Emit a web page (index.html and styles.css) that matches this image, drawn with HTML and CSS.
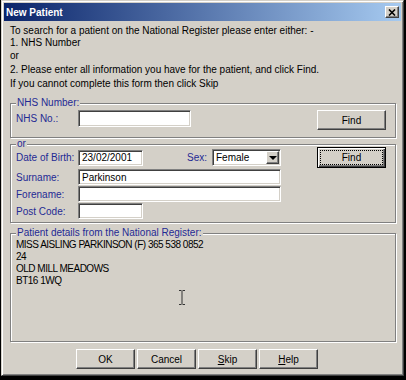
FILE: index.html
```html
<!DOCTYPE html>
<html lang="en">
<head>
    <meta charset="UTF-8">
    <meta name="viewport" content="width=device-width, initial-scale=1.0">
    <title>New Patient</title>
    <link rel="stylesheet" href="styles.css">
</head>
<body>
    <div class="window">
        <div class="titlebar">
            <span class="title">New Patient</span>
            <span class="close-btn">
                <svg width="8" height="7" viewBox="0 0 8 7"><path d="M1 0.5L7 6.5M7 0.5L1 6.5" stroke="#000" stroke-width="1.6" fill="none"/></svg>
            </span>
        </div>
        <div class="content">
            <p class="intro">To search for a patient on the National Register please enter either: -</p>
            <p class="intro">1. NHS Number</p>
            <p class="intro or-line">or</p>
            <p class="intro gap">2. Please enter all information you have for the patient, and click Find.</p>
            <p class="intro gap">If you cannot complete this form then click Skip</p>

            <!-- Search by NHS number -->
            <fieldset class="group nhs-group">
                <legend>NHS Number:</legend>
                <div class="nhs-row">
                    <label class="label">NHS No.:</label>
                    <input type="text" class="field nhs-field">
                    <button class="btn find">Find</button>
                </div>
            </fieldset>

            <!-- Search by details -->
            <fieldset class="group search-group">
                <legend>or</legend>
                <div class="search-body">
                    <div class="fields">
                        <div class="row">
                            <label class="label">Date of Birth:</label>
                            <input type="text" class="field short-field" value="23/02/2001">
                            <label class="label sex-label">Sex:</label>
                            <div class="combo">
                                <span class="combo-text">Female</span>
                                <span class="combo-arrow"><span class="triangle"></span></span>
                            </div>
                        </div>
                        <div class="row surname-row">
                            <label class="label">Surname:</label>
                            <input type="text" class="field long-field" value="Parkinson">
                        </div>
                        <div class="row tight">
                            <label class="label">Forename:</label>
                            <input type="text" class="field long-field">
                        </div>
                        <div class="row tight">
                            <label class="label">Post Code:</label>
                            <input type="text" class="field short-field">
                        </div>
                    </div>
                    <button class="btn find default">Find</button>
                </div>
            </fieldset>

            <!-- Result -->
            <fieldset class="group details">
                <legend>Patient details from the National Register:</legend>
                <div class="details-text">
                    MISS AISLING PARKINSON (F) 365 538 0852<br>
                    24<br>
                    OLD MILL MEADOWS<br>
                    BT16 1WQ
                </div>
            </fieldset>

            <div class="actions">
                <button class="btn action">OK</button>
                <button class="btn action">Cancel</button>
                <button class="btn action"><u>S</u>kip</button>
                <button class="btn action"><u>H</u>elp</button>
            </div>
        </div>
        <svg class="ibeam" width="6" height="15" viewBox="0 0 6 15"><path d="M0 0.5h2.5M3.5 0.5H6M3 1v13M0 14.5h2.5M3.5 14.5H6" stroke="#333" stroke-width="1" fill="none"/></svg>
    </div>
</body>
</html>
```

FILE: styles.css
```css
body {
    margin: 0;
    padding: 0;
    background-color: #000;
    font-family: "Liberation Sans", Arial, sans-serif;
    font-size: 10px;
    color: #000;
}
.window {
    position: relative;
    box-sizing: border-box;
    width: 403px;
    height: 376px;
    margin-left: 1px;
    padding: 1px;
    background-color: #d4d0c8;
    border: 1px solid;
    border-color: #d4d0c8 #404040 #404040 #d4d0c8;
    box-shadow: inset 1px 1px 0 #fff, inset -1px -1px 0 #808080;
}
.titlebar {
    display: flex;
    align-items: center;
    height: 18px;
    margin: 1px 1px 0 1px;
    background: linear-gradient(to right, #0a246a, #a6caf0);
}
.title {
    flex: 1;
    padding-left: 2px;
    color: #fff;
    font-weight: bold;
    font-size: 10px;
}
.close-btn {
    display: flex;
    align-items: center;
    justify-content: center;
    box-sizing: border-box;
    width: 14px;
    height: 12px;
    margin-right: 2px;
    background-color: #d4d0c8;
    border: 1px solid;
    border-color: #fff #404040 #404040 #fff;
    box-shadow: inset -1px -1px 0 #808080;
}
.content {
    padding: 4px 6px 0 7px;
}
.intro {
    margin: 0;
    line-height: 12px;
}
.intro.or-line {
    margin-top: 1px;
}
.intro.gap {
    margin-top: 2px;
}
.group {
    margin: 0;
    padding: 0 9px 0 5px;
    border: 1px solid #808080;
    box-shadow: inset 1px 1px 0 #fff, 1px 1px 0 #fff;
}
.group legend {
    padding: 0 1px;
    line-height: 10px;
    color: #1f2a94;
    background-color: #d4d0c8;
}
.label {
    color: #1f2a94;
    width: 62px;
    flex-shrink: 0;
}
.field {
    box-sizing: border-box;
    height: 16px;
    margin: 0;
    padding: 0 3px;
    background-color: #fff;
    border: 1px solid;
    border-color: #808080 #fff #fff #808080;
    box-shadow: inset 1px 1px 0 #404040, inset -1px -1px 0 #d4d0c8;
    font-family: "Liberation Sans", Arial, sans-serif;
    font-size: 10px;
    color: #000;
    outline: none;
}
.btn {
    box-sizing: border-box;
    margin: 0;
    padding: 0;
    background-color: #d4d0c8;
    border: 1px solid;
    border-color: #fff #404040 #404040 #fff;
    box-shadow: inset -1px -1px 0 #808080;
    font-family: "Liberation Sans", Arial, sans-serif;
    font-size: 10px;
    color: #000;
}
.btn.default {
    border-color: #000;
    box-shadow: inset 1px 1px 0 #fff, inset -1px -1px 0 #404040, inset -2px -2px 0 #808080;
    outline: 1px dotted #000;
    outline-offset: -4px;
}

/* NHS number group */
.nhs-group {
    margin-top: 8px;
    padding-top: 2px;
    padding-bottom: 7px;
}
.nhs-row {
    display: flex;
    align-items: flex-start;
}
.nhs-row .label {
    line-height: 17px;
}
.nhs-field {
    width: 113px;
    height: 17px;
}
.find {
    width: 69px;
    height: 20px;
    margin-left: auto;
}

/* details search group */
.search-group {
    margin-top: 1px;
    padding-bottom: 3px;
}
.search-body {
    display: flex;
    align-items: flex-start;
}
.search-body .find {
    margin-top: -2px;
    height: 21px;
}
.row {
    display: flex;
    align-items: center;
}
.surname-row {
    margin-top: 3px;
}
.row.tight {
    margin-top: 1px;
}
.short-field {
    width: 65px;
}
.long-field {
    width: 203px;
}
.sex-label {
    width: 25px;
    margin-left: 44px;
}
.combo {
    box-sizing: border-box;
    display: flex;
    width: 69px;
    height: 17px;
    background-color: #fff;
    border: 1px solid;
    border-color: #808080 #fff #fff #808080;
    box-shadow: inset 1px 1px 0 #404040, inset -1px -1px 0 #d4d0c8;
}
.combo-text {
    flex: 1;
    padding: 1px 0 0 3px;
    line-height: 13px;
}
.combo-arrow {
    display: flex;
    align-items: center;
    justify-content: center;
    box-sizing: border-box;
    width: 13px;
    height: 13px;
    margin: 1px 1px 0 0;
    background-color: #d4d0c8;
    border: 1px solid;
    border-color: #fff #404040 #404040 #fff;
    box-shadow: inset -1px -1px 0 #808080;
}
.triangle {
    width: 0;
    height: 0;
    border-left: 4px solid transparent;
    border-right: 4px solid transparent;
    border-top: 4px solid #000;
}

/* register result */
.details {
    margin-top: 5px;
    padding-top: 1px;
    padding-bottom: 2px;
}
.details-text {
    height: 100px;
    line-height: 12px;
    letter-spacing: -0.5px;
}

.actions {
    display: flex;
    gap: 2px;
    margin-top: 7px;
    padding-left: 66px;
}
.action {
    width: 59px;
    height: 20px;
}
.ibeam {
    position: absolute;
    left: 177px;
    top: 289px;
}
```
